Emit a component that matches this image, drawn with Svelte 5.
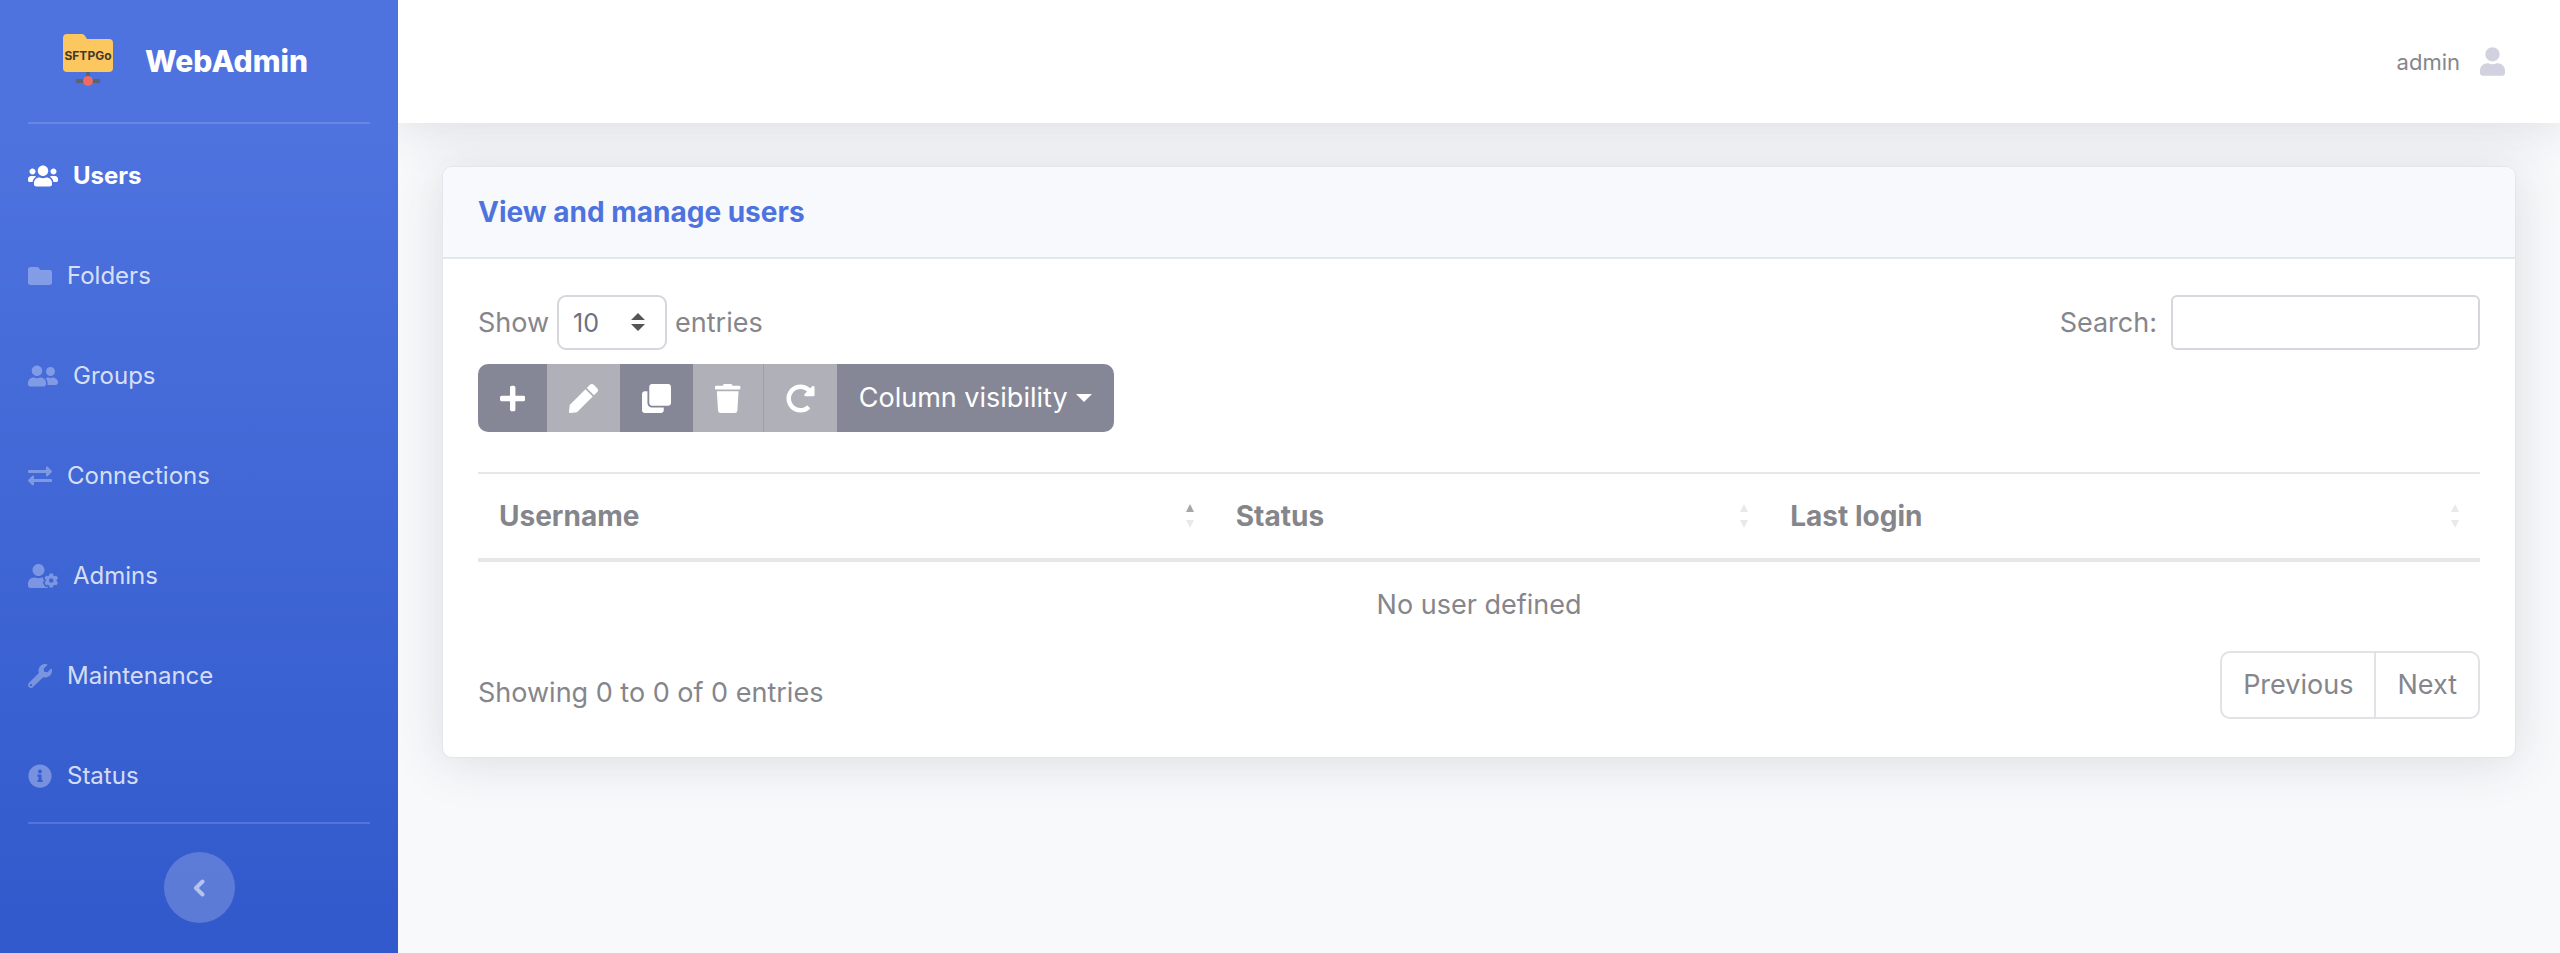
<script>
  const folder = 'M464 128H272l-64-64H48C21.49 64 0 85.49 0 112v288c0 26.51 21.49 48 48 48h416c26.51 0 48-21.49 48-48V176c0-26.51-21.49-48-48-48z';
  const users = 'M96 224c35.3 0 64-28.7 64-64s-28.7-64-64-64-64 28.7-64 64 28.7 64 64 64zm448 0c35.3 0 64-28.7 64-64s-28.7-64-64-64-64 28.7-64 64 28.7 64 64 64zm32 32h-64c-17.6 0-33.5 7.1-45.1 18.6 40.3 22.1 68.9 62 75.1 109.4h66c17.7 0 32-14.3 32-32v-32c0-35.3-28.7-64-64-64zm-256 0c61.9 0 112-50.1 112-112S381.9 32 320 32 208 82.1 208 144s50.1 112 112 112zm76.8 32h-8.3c-20.8 10-43.9 16-68.5 16s-47.6-6-68.5-16h-8.3C179.6 288 128 339.6 128 403.2V432c0 26.5 21.5 48 48 48h288c26.5 0 48-21.5 48-48v-28.8c0-63.6-51.6-115.2-115.2-115.2zm-223.7-13.4C161.5 263.1 145.6 256 128 256H64c-35.3 0-64 28.7-64 64v32c0 17.7 14.3 32 32 32h65.9c6.3-47.4 34.9-87.3 75.2-109.4z';
  const friends = 'M192 256c61.9 0 112-50.1 112-112S253.9 32 192 32 80 82.1 80 144s50.1 112 112 112zm76.8 32h-8.3c-20.8 10-43.9 16-68.5 16s-47.6-6-68.5-16h-8.3C51.6 288 0 339.6 0 403.2V432c0 26.5 21.5 48 48 48h288c26.5 0 48-21.5 48-48v-28.8c0-63.6-51.6-115.2-115.2-115.2zM480 256c53 0 96-43 96-96s-43-96-96-96-96 43-96 96 43 96 96 96zm48 32h-3.8c-13.9 4.8-28.6 8-44.2 8s-30.3-3.2-44.2-8H432c-20.4 0-39.2 5.9-55.7 15.4 24.4 26.3 39.7 61.2 39.7 99.8v38.4c0 2.2-.5 4.3-.6 6.4H592c26.5 0 48-21.5 48-48 0-61.9-50.1-112-112-112z';
  const exchange = 'M0 168v-16c0-13.255 10.745-24 24-24h360V80c0-21.367 25.899-32.042 40.971-16.971l80 80c9.372 9.373 9.372 24.569 0 33.941l-80 80C409.956 271.982 384 261.456 384 240v-48H24c-13.255 0-24-10.745-24-24zm488 152H128v-48c0-21.314-25.862-32.08-40.971-16.971l-80 80c-9.372 9.373-9.372 24.569 0 33.941l80 80C102.057 463.997 128 453.437 128 432v-48h360c13.255 0 24-10.745 24-24v-16c0-13.255-10.745-24-24-24z';
  const userCog = 'M610.5 373.3c2.6-14.1 2.6-28.5 0-42.6l25.8-14.9c3-1.7 4.3-5.2 3.3-8.5-6.7-21.6-18.2-41.2-33.2-57.4-2.3-2.5-6-3.1-9-1.4l-25.8 14.9c-10.9-9.3-23.4-16.5-36.9-21.3v-29.8c0-3.4-2.4-6.4-5.7-7.1-22.3-5-45-4.8-66.2 0-3.3.7-5.7 3.7-5.7 7.1v29.8c-13.5 4.8-26 12-36.9 21.3l-25.8-14.9c-2.9-1.7-6.7-1.1-9 1.4-15 16.2-26.5 35.8-33.2 57.4-1 3.3.4 6.8 3.3 8.5l25.8 14.9c-2.6 14.1-2.6 28.5 0 42.6l-25.8 14.9c-3 1.7-4.3 5.2-3.3 8.5 6.7 21.6 18.2 41.1 33.2 57.4 2.3 2.5 6 3.1 9 1.4l25.8-14.9c10.9 9.3 23.4 16.5 36.9 21.3v29.8c0 3.4 2.4 6.4 5.7 7.1 22.3 5 45 4.8 66.2 0 3.3-.7 5.7-3.7 5.7-7.1v-29.8c13.5-4.8 26-12 36.9-21.3l25.8 14.9c2.9 1.7 6.7 1.1 9-1.4 15-16.2 26.5-35.8 33.2-57.4 1-3.3-.4-6.8-3.3-8.5l-25.8-14.9zM496 400.5c-26.8 0-48.5-21.8-48.5-48.5s21.8-48.5 48.5-48.5 48.5 21.8 48.5 48.5-21.7 48.5-48.5 48.5zM224 256c70.7 0 128-57.3 128-128S294.7 0 224 0 96 57.3 96 128s57.3 128 128 128zm201.2 226.5c-2.3-1.2-4.6-2.6-6.8-3.9l-7.9 4.6c-6 3.4-12.8 5.3-19.6 5.3-10.9 0-21.4-4.6-28.9-12.6-18.3-19.8-32.3-43.9-40.2-69.6-5.5-17.7 1.9-36.4 17.9-45.7l7.9-4.6c-.1-2.6-.1-5.2 0-7.8l-7.9-4.6c-16-9.2-23.4-28-17.9-45.7.9-2.9 2.2-5.8 3.2-8.7-3.8-.3-7.5-1.2-11.4-1.2h-16.7c-22.2 10.2-46.9 16-72.9 16s-50.6-5.8-72.9-16h-16.7C60.2 288 0 348.2 0 422.4V464c0 26.5 21.5 48 48 48h352c10.1 0 19.5-3.2 27.2-8.5-1.2-3.8-2-7.7-2-11.8v-9.2z';
  const wrench = 'M507.73 109.1c-2.24-9.03-13.54-12.09-20.12-5.51l-74.36 74.36-67.88-11.31-11.31-67.88 74.36-74.36c6.62-6.62 3.43-17.9-5.66-20.16-47.38-11.74-99.55.91-136.58 37.93-39.64 39.64-50.55 97.1-34.05 147.2L18.74 402.76c-24.99 24.99-24.99 65.51 0 90.5 24.99 24.99 65.51 24.99 90.5 0l213.21-213.21c50.12 16.71 107.47 5.68 147.37-34.22 37.07-37.07 49.7-89.32 37.91-136.73zM64 472c-13.25 0-24-10.75-24-24 0-13.26 10.75-24 24-24s24 10.74 24 24c0 13.25-10.75 24-24 24z';
  const info = 'M256 8C119.043 8 8 119.083 8 256c0 136.997 111.043 248 248 248s248-111.003 248-248C504 119.083 392.957 8 256 8zm0 110c23.196 0 42 18.804 42 42s-18.804 42-42 42-42-18.804-42-42 18.804-42 42-42zm56 254c0 6.627-5.373 12-12 12h-88c-6.627 0-12-5.373-12-12v-24c0-6.627 5.373-12 12-12h12v-64h-12c-6.627 0-12-5.373-12-12v-24c0-6.627 5.373-12 12-12h64c6.627 0 12 5.373 12 12v100h12c6.627 0 12 5.373 12 12v24z';
  const plus = 'M416 208H272V64c0-17.67-14.33-32-32-32h-32c-17.67 0-32 14.33-32 32v144H32c-17.67 0-32 14.33-32 32v32c0 17.67 14.33 32 32 32h144v144c0 17.67 14.33 32 32 32h32c17.67 0 32-14.33 32-32V304h144c17.67 0 32-14.33 32-32v-32c0-17.67-14.33-32-32-32z';
  const pen = 'M290.74 93.24l128.02 128.02-277.99 277.99-114.14 12.6C11.35 513.54-1.56 500.62.14 485.34l12.7-114.22 277.9-277.88zm207.2-19.06l-60.11-60.11c-18.75-18.75-49.16-18.75-67.91 0l-56.55 56.55 128.02 128.02 56.55-56.55c18.75-18.76 18.75-49.16 0-67.91z';
  const clone = 'M464 0c26.51 0 48 21.49 48 48v288c0 26.51-21.49 48-48 48H176c-26.51 0-48-21.49-48-48V48c0-26.51 21.49-48 48-48h288M176 416c-44.112 0-80-35.888-80-80V128H48c-26.51 0-48 21.49-48 48v288c0 26.51 21.49 48 48 48h288c26.51 0 48-21.49 48-48v-48H176z';
  const trash = 'M432 32H312l-9.4-18.7A24 24 0 0 0 281.1 0H166.8a23.72 23.72 0 0 0-21.4 13.3L136 32H16A16 16 0 0 0 0 48v32a16 16 0 0 0 16 16h416a16 16 0 0 0 16-16V48a16 16 0 0 0-16-16zM53.2 467a48 48 0 0 0 47.9 45h245.8a48 48 0 0 0 47.9-45L416 128H32z';
  const redo = 'M256.455 8c66.269.119 126.437 26.233 170.859 68.685l35.715-35.715C478.149 25.851 504 36.559 504 57.941V192c0 13.255-10.745 24-24 24H345.941c-21.382 0-32.09-25.851-16.971-40.971l41.75-41.75c-30.864-28.899-70.801-44.907-113.23-45.273-92.398-.798-170.283 73.977-169.484 169.442C88.764 348.009 162.184 424 256 424c41.127 0 79.997-14.678 110.629-41.556 4.743-4.161 11.906-3.908 16.368.553l39.662 39.662c4.872 4.872 4.631 12.815-.482 17.433C378.202 479.813 319.926 504 256 504 119.034 504 8.001 392.967 8 256.002 7.991 119.193 119.646 7.755 256.455 8z';

  const nav = [
    { label: 'Users', icon: users, width: 640 },
    { label: 'Folders', icon: folder, width: 512 },
    { label: 'Groups', icon: friends, width: 640 },
    { label: 'Connections', icon: exchange, width: 512 },
    { label: 'Admins', icon: userCog, width: 640 },
    { label: 'Maintenance', icon: wrench, width: 512 },
    { label: 'Status', icon: info, width: 512 }
  ];

  const actions = [
    { label: 'Add', icon: plus, width: 448, disabled: false },
    { label: 'Edit', icon: pen, width: 512, disabled: true },
    { label: 'Clone', icon: clone, width: 512, disabled: false },
    { label: 'Delete', icon: trash, width: 448, disabled: true },
    { label: 'Quota scan', icon: redo, width: 512, disabled: true }
  ];

  const columns = [
    { label: 'Username', sort: 'ascending' },
    { label: 'Status', sort: 'none' },
    { label: 'Last login', sort: 'none' }
  ];

  let active = $state('Users');
  let pageSize = $state(10);
  let search = $state('');
</script>

<div class="wrapper">
  <aside class="sidebar">
    <a class="brand" href="#users">
      <svg class="logo" viewBox="0 0 50 54" aria-hidden="true">
        <path d="M25 38v8M13 47h24" stroke="#5a6275" stroke-width="4" fill="none" />
        <path d="M4 0h15q2 0 3 2l2 3h22q4 0 4 4v25q0 4-4 4H4q-4 0-4-4V4q0-4 4-4z" fill="#fdc75f" />
        <circle cx="25" cy="47" r="5" fill="#ec6b62" />
        <text x="25" y="26" text-anchor="middle">SFTPGo</text>
      </svg>
      <span>WebAdmin</span>
    </a>

    <nav>
      {#each nav as item}
        <a
          href="#{item.label.toLowerCase()}"
          class:active={active === item.label}
          onclick={() => (active = item.label)}
        >
          <svg class="icon" viewBox="0 0 {item.width} 512" aria-hidden="true"><path d={item.icon} /></svg>
          <span>{item.label}</span>
        </a>
      {/each}
    </nav>

    <button class="toggle" aria-label="Toggle sidebar">
      <svg viewBox="0 0 12 20" aria-hidden="true"><path d="M9.500 3.500L3 10l6.500 6.500" /></svg>
    </button>
  </aside>

  <div class="content">
    <header class="topbar">
      <a class="account" href="#profile">
        <span>admin</span>
        <svg viewBox="0 0 448 512" aria-hidden="true">
          <path d="M224 256c70.7 0 128-57.3 128-128S294.7 0 224 0 96 57.3 96 128s57.3 128 128 128zm89.600 32h-16.700c-22.200 10.200-46.900 16-72.900 16s-50.600-5.800-72.900-16h-16.700C60.200 288 0 348.200 0 422.400V464c0 26.500 21.500 48 48 48h352c26.500 0 48-21.500 48-48v-41.600c0-74.200-60.200-134.400-134.400-134.400z" />
        </svg>
      </a>
    </header>

    <main>
      <section class="card">
        <div class="card-header">
          <h6>View and manage users</h6>
        </div>

        <div class="card-body">
          <div class="controls">
            <div class="length">
              <label for="page-size">Show</label>
              <div class="select">
                <select id="page-size" bind:value={pageSize}>
                  <option value={10}>10</option>
                  <option value={25}>25</option>
                  <option value={50}>50</option>
                </select>
                <svg viewBox="0 0 14 18" aria-hidden="true"><path d="M7 0l7 7H0zM7 18l7-7H0z" /></svg>
              </div>
              <span>entries</span>
            </div>
            <div class="search">
              <label for="search">Search:</label>
              <input id="search" type="search" bind:value={search} />
            </div>
          </div>

          <div class="buttons">
            {#each actions as action}
              <button disabled={action.disabled} aria-label={action.label}>
                <svg class="icon" viewBox="0 0 {action.width} 512" aria-hidden="true"><path d={action.icon} /></svg>
              </button>
            {/each}
            <button class="visibility">Column visibility<i class="caret"></i></button>
          </div>

          <table>
            <thead>
              <tr>
                {#each columns as column}
                  <th aria-sort={column.sort}>
                    <div class="heading">
                      {column.label}
                      <svg class="sort" viewBox="0 0 8 24" aria-hidden="true">
                        <path class="up" d="M4 0l4 8H0z" />
                        <path d="M4 24l4-8H0z" />
                      </svg>
                    </div>
                  </th>
                {/each}
              </tr>
            </thead>
            <tbody>
              <tr>
                <td colspan="3">No user defined</td>
              </tr>
            </tbody>
          </table>

          <div class="footer">
            <p>Showing 0 to 0 of 0 entries</p>
            <div class="pagination">
              <button>Previous</button>
              <button>Next</button>
            </div>
          </div>
        </div>
      </section>
    </main>
  </div>
</div>

<style>
  :global(body) {
    background: #f8f9fb;
    color: #85868c;
    font-family: Inter, Roboto, "Liberation Sans", sans-serif;
    font-size: 27px;
    line-height: 44px;
  }

  .wrapper {
    display: flex;
    min-height: 100vh;
  }

  .wrapper * {
    box-sizing: border-box;
  }

  a {
    text-decoration: none;
  }

  button,
  input,
  select {
    font: inherit;
    color: inherit;
    margin: 0;
  }

  .icon {
    display: block;
    height: 24px;
    fill: currentColor;
  }

  /* Sidebar */
  .sidebar {
    position: relative;
    z-index: 1;
    width: 398px;
    flex-shrink: 0;
    padding: 0 28px;
    display: flex;
    flex-direction: column;
    background: linear-gradient(180deg, #4e73df 14%, #3159cb 100%);
  }

  .brand {
    display: flex;
    align-items: center;
    gap: 32px;
    height: 124px;
    padding-left: 35px;
    border-bottom: 2px solid rgba(255, 255, 255, 0.15);
    color: #fff;
    font-size: 30px;
    font-weight: 800;
  }

  .logo {
    width: 50px;
    height: 54px;
  }

  .logo text {
    font-size: 12px;
    font-weight: 700;
    fill: #443a2c;
  }

  nav {
    display: flex;
    flex-direction: column;
    gap: 8px;
    padding-top: 6px;
    border-bottom: 2px solid rgba(255, 255, 255, 0.15);
  }

  nav a {
    display: flex;
    align-items: center;
    gap: 15px;
    padding: 30px 0;
    color: rgba(255, 255, 255, 0.8);
    font-size: 24px;
    line-height: 32px;
  }

  nav .icon {
    opacity: 0.4;
  }

  nav a.active {
    color: #fff;
    font-weight: 700;
  }

  nav a.active .icon {
    opacity: 1;
  }

  .toggle {
    display: flex;
    align-items: center;
    justify-content: center;
    align-self: center;
    width: 71px;
    height: 71px;
    margin: 28px 0;
    border: none;
    border-radius: 50%;
    background: rgba(255, 255, 255, 0.2);
    cursor: pointer;
  }

  .toggle svg {
    width: 12px;
    height: 20px;
    fill: none;
    stroke: rgba(255, 255, 255, 0.55);
    stroke-width: 4;
    stroke-linecap: round;
    stroke-linejoin: round;
  }

  /* Content */
  .content {
    flex: 1;
    min-width: 0;
  }

  .topbar {
    display: flex;
    align-items: center;
    justify-content: flex-end;
    height: 123px;
    padding: 0 55px;
    background: #fff;
    box-shadow: 0 4px 50px rgba(58, 59, 69, 0.15);
  }

  .account {
    display: flex;
    align-items: center;
    gap: 20px;
    color: #85868c;
    font-size: 22px;
  }

  .account svg {
    width: 25px;
    height: 29px;
    fill: #d1d1e0;
  }

  main {
    padding: 43px 44px;
  }

  .card {
    border: 1px solid #e3e6ea;
    border-radius: 10px;
    background: #fff;
    box-shadow: 0 4px 50px rgba(58, 59, 69, 0.15);
  }

  .card-header {
    padding: 23px 35px;
    border-bottom: 2px solid #e3e6ea;
    border-radius: 10px 10px 0 0;
    background: #f8f9fc;
  }

  h6 {
    margin: 0;
    color: #4e73df;
    font-size: 28px;
    font-weight: 700;
  }

  .card-body {
    padding: 36px 35px 38px;
  }

  .controls,
  .footer {
    display: flex;
    justify-content: space-between;
  }

  .length,
  .search {
    display: flex;
    align-items: center;
    gap: 8px;
  }

  .search {
    gap: 14px;
  }

  .select {
    position: relative;
  }

  select {
    display: block;
    width: 110px;
    height: 55px;
    padding: 0 14px;
    appearance: none;
    border: 2px solid #d5d7dd;
    border-radius: 9px;
    background: #fff;
    color: #6e707e;
    font-size: 25px;
  }

  .select svg {
    position: absolute;
    top: 18px;
    right: 22px;
    width: 14px;
    height: 18px;
    fill: #555;
    pointer-events: none;
  }

  input {
    width: 309px;
    height: 55px;
    padding: 0 14px;
    border: 2px solid #d5d7dd;
    border-radius: 6px;
    background: #fff;
    outline: none;
    font-size: 25px;
  }

  .buttons {
    display: flex;
    width: fit-content;
    margin: 14px 0 40px;
    border-radius: 10px;
    overflow: hidden;
  }

  .buttons button {
    display: flex;
    align-items: center;
    height: 68px;
    padding: 0 22px;
    border: none;
    background: #858796;
    color: #fff;
  }

  .buttons button:disabled {
    background: #afb0b8;
  }

  .buttons button:disabled + button:disabled {
    border-left: 1px solid #9d9eaa;
  }

  .buttons .icon {
    height: 29px;
  }

  .caret {
    margin-left: 8px;
    border: 8px solid transparent;
    border-top-color: #fff;
    border-bottom: 0;
  }

  table {
    width: 100%;
    table-layout: fixed;
    border-collapse: collapse;
  }

  th {
    padding: 20px 21px;
    border-top: 2px solid #e6e7ea;
    border-bottom: 4px solid #e6e7ea;
    font-size: 28px;
    font-weight: 700;
    text-align: left;
  }

  th:nth-child(1) {
    width: 36.8%;
  }

  th:nth-child(2) {
    width: 27.7%;
  }

  .heading {
    display: flex;
    align-items: center;
    justify-content: space-between;
  }

  .sort {
    width: 8px;
    height: 24px;
    fill: #e9e9ec;
  }

  th[aria-sort='ascending'] .up {
    fill: #a5a6ab;
  }

  td {
    padding: 21px;
    text-align: center;
  }

  .footer {
    align-items: center;
    padding-top: 3px;
  }

  .footer p {
    margin: 0;
    padding-top: 16px;
  }

  .pagination {
    display: flex;
    border: 2px solid #e1e2e6;
    border-radius: 10px;
  }

  .pagination button {
    height: 64px;
    padding: 0 21px;
    border: none;
    background: none;
  }

  .pagination button + button {
    border-left: 2px solid #e1e2e6;
  }
</style>
